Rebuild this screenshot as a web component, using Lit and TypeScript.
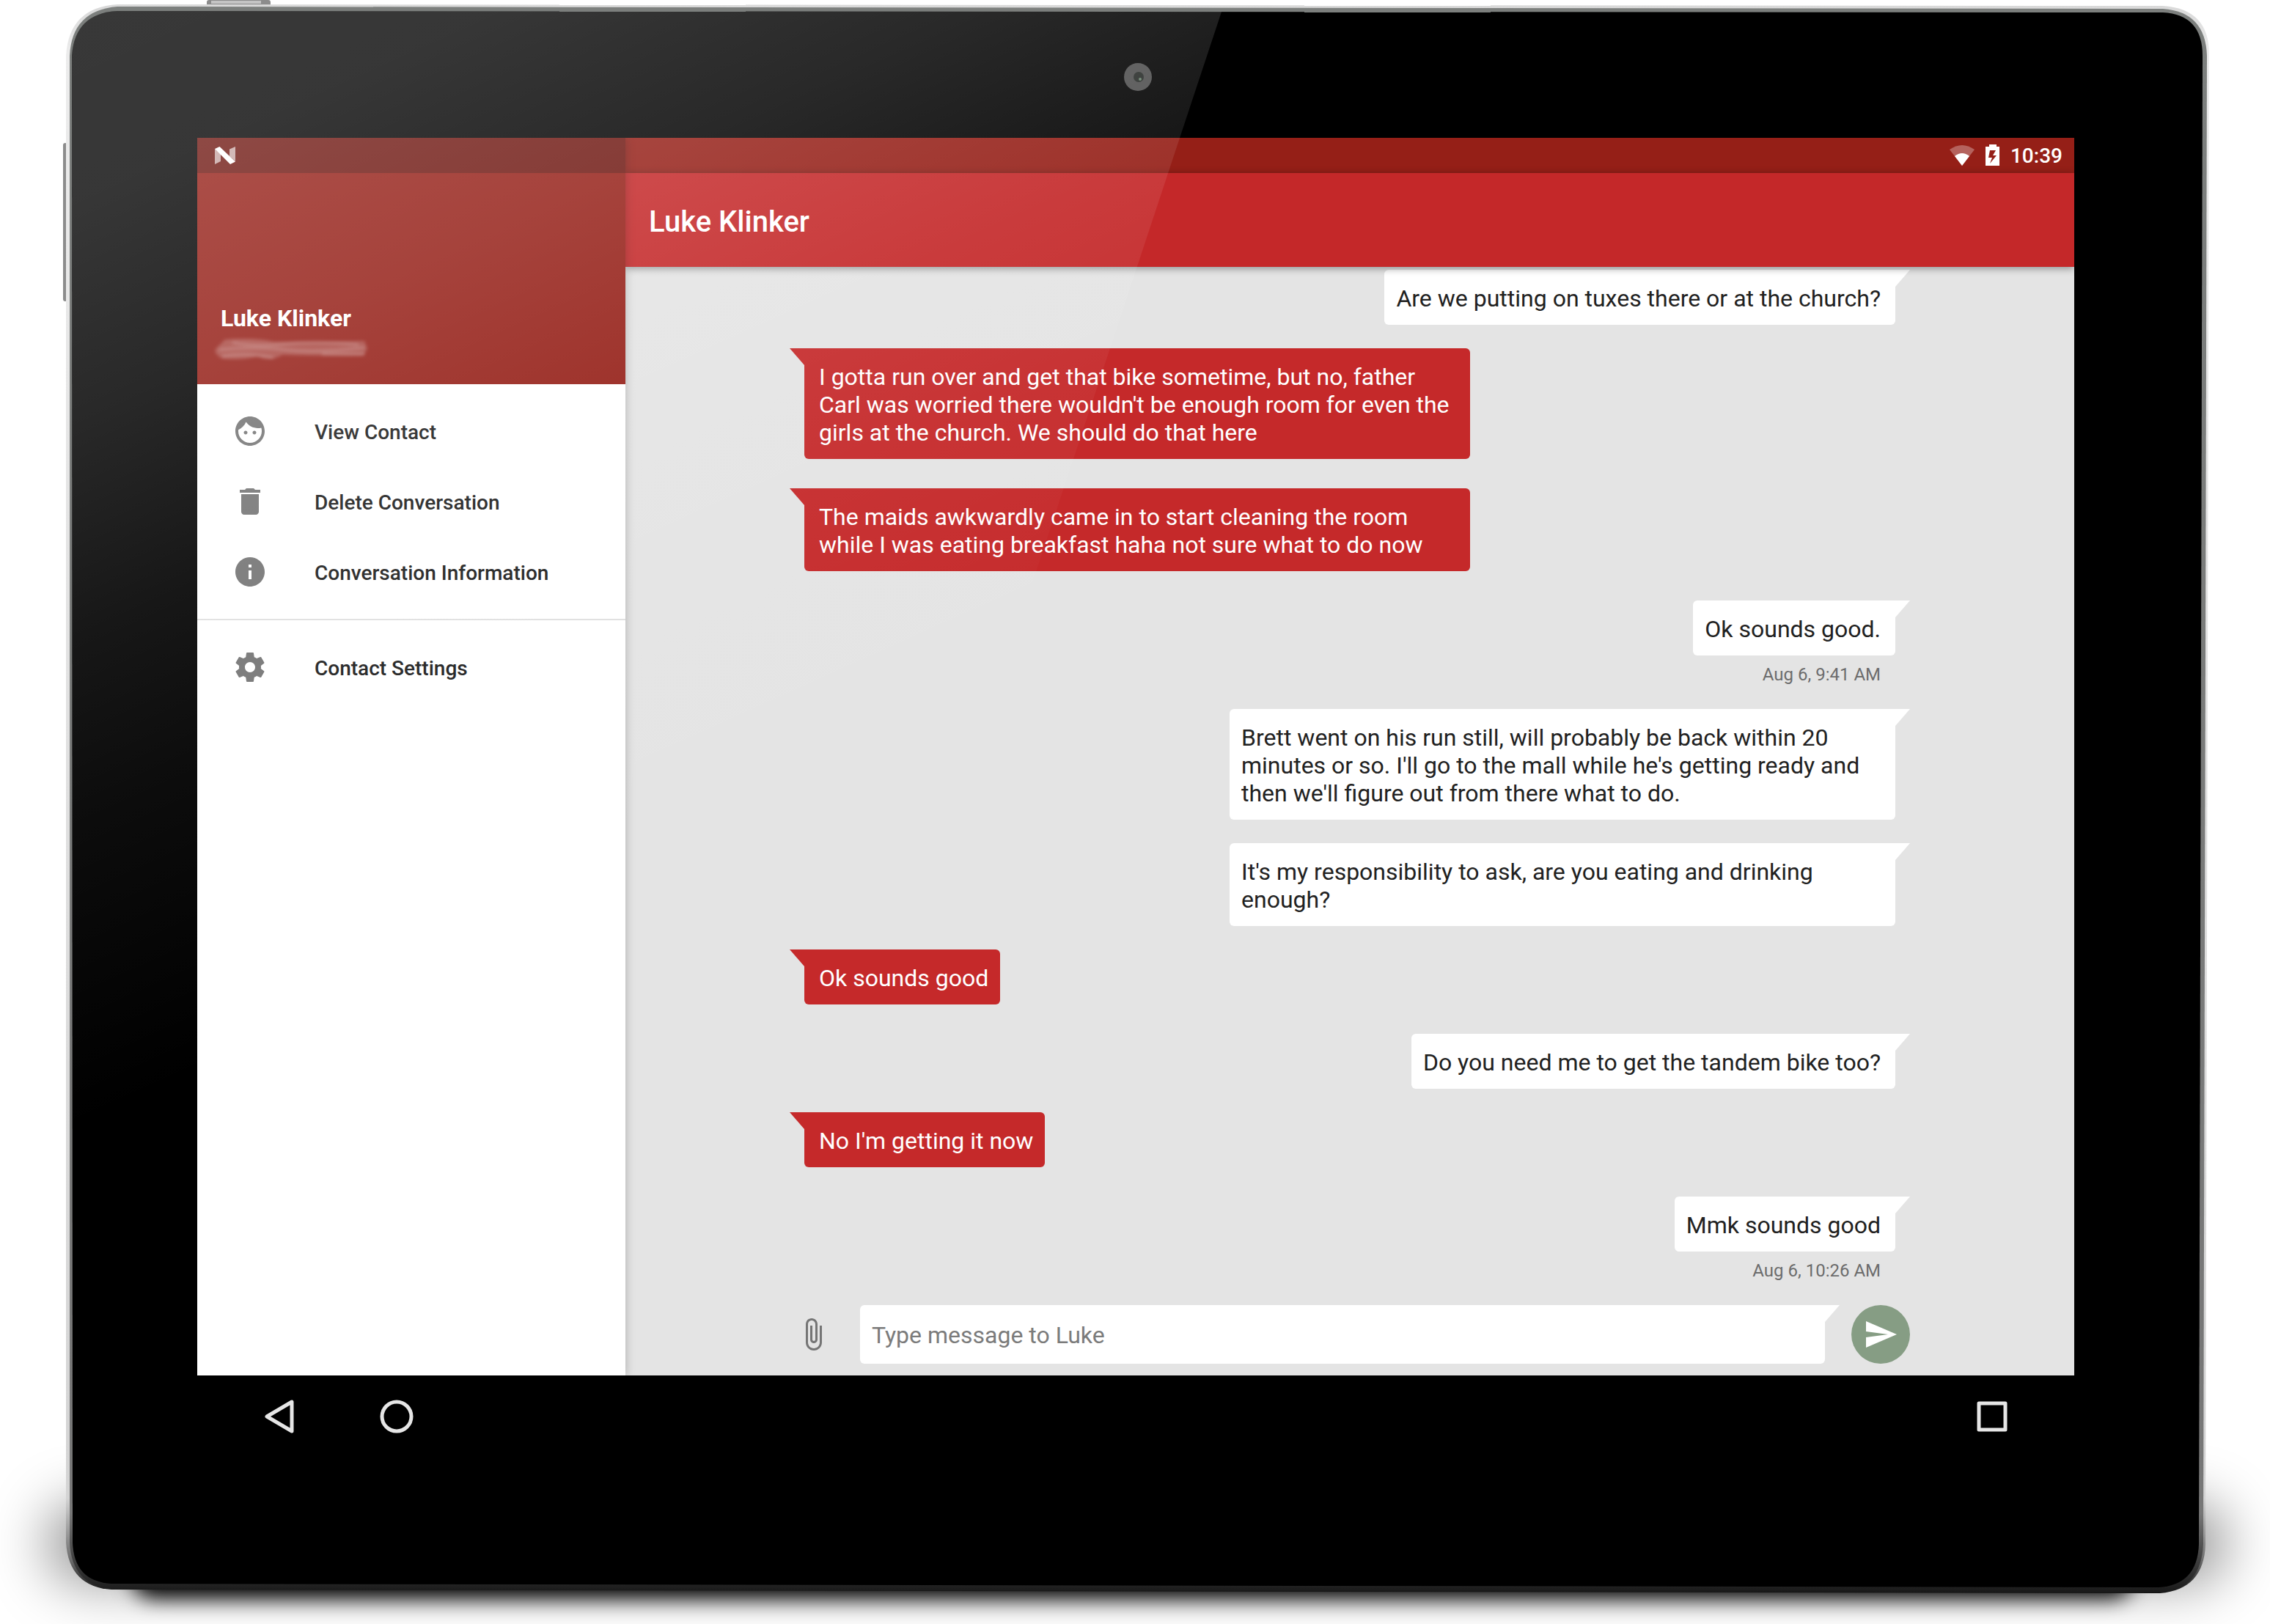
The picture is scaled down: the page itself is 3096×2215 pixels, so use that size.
import { LitElement, html, css, svg } from "lit";
import { customElement, property } from "lit/decorators.js";

const ICONS: Record<string, ReturnType<typeof svg>> = {
  face: svg`<path d="M9 11.75c-.69 0-1.25.56-1.25 1.25s.56 1.25 1.25 1.25 1.25-.56 1.25-1.25-.56-1.25-1.25-1.25zm6 0c-.69 0-1.25.56-1.25 1.25s.56 1.25 1.25 1.25 1.25-.56 1.25-1.25-.56-1.25-1.25-1.25zM12 2C6.48 2 2 6.48 2 12s4.48 10 10 10 10-4.48 10-10S17.52 2 12 2zm0 18c-4.41 0-8-3.59-8-8 0-.29.02-.58.05-.86 2.36-1.05 4.23-2.98 5.21-5.37C11.07 8.33 14.05 10 17.42 10c.78 0 1.53-.09 2.25-.26.21.71.33 1.47.33 2.26 0 4.41-3.59 8-8 8z"/>`,
  delete: svg`<path d="M6 19c0 1.1.9 2 2 2h8c1.1 0 2-.9 2-2V7H6v12zM19 4h-3.5l-1-1h-5l-1 1H5v2h14V4z"/>`,
  info: svg`<path d="M12 2C6.48 2 2 6.48 2 12s4.48 10 10 10 10-4.48 10-10S17.52 2 12 2zm1 15h-2v-6h2v6zm0-8h-2V7h2v2z"/>`,
  settings: svg`<path d="M19.43 12.98c.04-.32.07-.64.07-.98s-.03-.66-.07-.98l2.11-1.65c.19-.15.24-.42.12-.64l-2-3.46c-.12-.22-.39-.3-.61-.22l-2.49 1c-.52-.4-1.08-.73-1.69-.98l-.38-2.65C14.46 2.18 14.25 2 14 2h-4c-.25 0-.46.18-.49.42l-.38 2.65c-.61.25-1.17.59-1.69.98l-2.49-1c-.23-.09-.49 0-.61.22l-2 3.46c-.13.22-.07.49.12.64l2.11 1.65c-.04.32-.07.65-.07.98s.03.66.07.98l-2.11 1.65c-.19.15-.24.42-.12.64l2 3.46c.12.22.39.3.61.22l2.49-1c.52.4 1.08.73 1.69.98l.38 2.65c.03.24.24.42.49.42h4c.25 0 .46-.18.49-.42l.38-2.65c.61-.25 1.17-.59 1.69-.98l2.49 1c.23.09.49 0 .61-.22l2-3.46c.12-.22.07-.49-.12-.64l-2.11-1.65zM12 15.5c-1.93 0-3.5-1.57-3.5-3.5s1.57-3.5 3.5-3.5 3.5 1.57 3.5 3.5-1.57 3.5-3.5 3.5z"/>`,
  attach: svg`<path d="M16.5 6v11.5c0 2.21-1.79 4-4 4s-4-1.79-4-4V5c0-1.38 1.12-2.5 2.5-2.5s2.5 1.12 2.5 2.5v10.5c0 .55-.45 1-1 1s-1-.45-1-1V6H10v9.5c0 1.38 1.12 2.5 2.5 2.5s2.5-1.12 2.5-2.5V5c0-2.21-1.79-4-4-4S7 2.79 7 5v12.5c0 3.04 2.46 5.5 5.5 5.5s5.5-2.46 5.5-5.5V6h-1.5z"/>`,
  send: svg`<path d="M2.01 21L23 12 2.01 3 2 10l15 2-15 2z"/>`,
};

@customElement("md-icon")
class MdIcon extends LitElement {
  @property() name = "";
  static styles = css`
    :host { display: block; flex: none; width: 48px; height: 48px; }
    .icon { display: block; width: 100%; height: 100%; fill: currentColor; }
  `;
  render() {
    return html`<svg class="icon" viewBox="0 0 24 24" aria-hidden="true">${ICONS[this.name]}</svg>`;
  }
}

interface Message {
  from: "me" | "them";
  text: string;
  time?: string;
}

const MESSAGES: Message[] = [
  { from: "me", text: "Are we putting on tuxes there or at the church?" },
  { from: "them", text: "I gotta run over and get that bike sometime, but no, father Carl was worried there wouldn't be enough room for even the girls at the church. We should do that here" },
  { from: "them", text: "The maids awkwardly came in to start cleaning the room while I was eating breakfast haha not sure what to do now" },
  { from: "me", text: "Ok sounds good.", time: "Aug 6, 9:41 AM" },
  { from: "me", text: "Brett went on his run still, will probably be back within 20 minutes or so. I'll go to the mall while he's getting ready and then we'll figure out from there what to do." },
  { from: "me", text: "It's my responsibility to ask, are you eating and drinking enough?" },
  { from: "them", text: "Ok sounds good" },
  { from: "me", text: "Do you need me to get the tandem bike too?" },
  { from: "them", text: "No I'm getting it now" },
  { from: "me", text: "Mmk sounds good", time: "Aug 6, 10:26 AM" },
];

@customElement("chat-message")
class ChatMessage extends LitElement {
  @property({ attribute: false }) message!: Message;
  static styles = css`
    :host { display: block; }
    .row { display: flex; flex-direction: column; padding: 0 20px; }
    .me { align-items: flex-end; margin-bottom: 32px; }
    .them { align-items: flex-start; margin-bottom: 40px; }
    .bubble {
      position: relative;
      box-sizing: border-box;
      max-width: 908px;
      margin: 0;
      font-size: 32px;
      line-height: 38px;
    }
    .me .bubble {
      padding: 20px 20px 17px 16px;
      border-radius: 6px 0 6px 6px;
      background: #fff;
      color: #212121;
    }
    .them .bubble {
      padding: 20px 16px 17px 20px;
      border-radius: 0 6px 6px 6px;
      background: #c5292a;
      color: #fff;
    }
    .bubble::before {
      content: "";
      position: absolute;
      top: 0;
      width: 20px;
      height: 23px;
      background: inherit;
    }
    .me .bubble::before { left: 100%; clip-path: polygon(0 0, 100% 0, 0 100%); }
    .them .bubble::before { right: 100%; clip-path: polygon(0 0, 100% 0, 100% 100%); }
    .time {
      padding: 11px 20px 0;
      font-size: 24px;
      line-height: 30px;
      color: #6c6c6c;
    }
  `;
  render() {
    const m = this.message;
    return html`<div class="row ${m.from}">
      <p class="bubble">${m.text}</p>
      ${m.time ? html`<time class="time">${m.time}</time>` : null}
    </div>`;
  }
}

@customElement("contact-drawer")
class ContactDrawer extends LitElement {
  static styles = css`
    :host { display: flex; flex-direction: column; background: #fff; }
    .header {
      display: flex;
      flex-direction: column;
      height: 336px;
      background: #951f17;
      color: #fff;
    }
    .status {
      display: flex;
      align-items: center;
      height: 48px;
      padding: 0 24px;
      background: rgba(0, 0, 0, 0.25);
    }
    .nougat { display: block; width: 28px; height: 24px; }
    .person { margin-top: auto; padding: 0 20px 30px; }
    .name {
      margin: 0 0 4px;
      padding-left: 12px;
      font-size: 32px;
      line-height: 40px;
      font-weight: 700;
    }
    .smudge { display: block; width: 216px; height: 36px; }
    .menu { margin: 0; padding: 16px 0; list-style: none; }
    .menu + .menu { border-top: 2px solid #e0e0e0; }
    .item {
      display: flex;
      align-items: center;
      gap: 64px;
      width: 100%;
      height: 96px;
      padding: 0 48px;
      border: 0;
      background: none;
      color: #212121;
      font: 500 28px/40px Roboto, sans-serif;
      text-align: left;
    }
    .label { padding-top: 4px; }
    .glyph { color: #757575; }
  `;
  private item(icon: string, label: string) {
    return html`<li><button class="item" type="button"><md-icon class="glyph" name=${icon}></md-icon><span class="label">${label}</span></button></li>`;
  }
  render() {
    return html`
      <div class="header">
        <div class="status">
          <svg class="nougat" viewBox="0 0 28 24" aria-hidden="true">
            <path d="M0 3L8 10V20L0 24zM20 3.500L28 0V20L20 13z" fill="#fff" fill-opacity=".62"/>
            <path d="M0 3L6.500 0L28 20.500L21 24z" fill="#fff"/>
          </svg>
        </div>
        <div class="person">
          <h2 class="name">Luke Klinker</h2>
          <svg class="smudge" viewBox="0 0 216 36" aria-hidden="true">
            <defs><filter id="soft" x="-10%" y="-40%" width="120%" height="180%"><feGaussianBlur stdDeviation="2"/></filter></defs>
            <g filter="url(#soft)" fill="#fff">
              <path d="M18 5Q60 2 84 8Q140 9 208 7L212 17L207 27Q150 28 96 26Q80 36 62 28Q40 34 14 31Q2 24 5 18Z" fill-opacity=".2"/>
              <path d="M10 19Q60 14 100 19T208 16M14 28Q44 22 84 30M28 9Q60 16 100 11T200 12M150 25L208 25" fill="none" stroke="#fff" stroke-opacity=".16" stroke-width="4"/>
            </g>
          </svg>
        </div>
      </div>
      <ul class="menu">
        ${this.item("face", "View Contact")}
        ${this.item("delete", "Delete Conversation")}
        ${this.item("info", "Conversation Information")}
      </ul>
      <ul class="menu">
        ${this.item("settings", "Contact Settings")}
      </ul>
    `;
  }
}

@customElement("chat-pane")
class ChatPane extends LitElement {
  static styles = css`
    :host { display: flex; flex-direction: column; background: #e4e4e4; }
    .status {
      display: flex;
      align-items: center;
      justify-content: flex-end;
      height: 48px;
      padding: 0 16px;
      background: #951f17;
      color: #fff;
    }
    .wifi { display: block; width: 36px; height: 28px; margin-right: 14px; }
    .battery { display: block; width: 20px; height: 30px; margin-right: 14px; }
    .clock { padding-top: 2px; font-size: 28px; line-height: 46px; font-weight: 500; }
    .toolbar {
      position: relative;
      display: flex;
      align-items: center;
      box-sizing: border-box;
      height: 128px;
      padding: 6px 32px 0;
      background: #c42829;
      color: #fff;
      box-shadow: 0 2px 10px rgba(0, 0, 0, 0.4);
      z-index: 1;
    }
    .title { margin: 0; font-size: 40px; line-height: 48px; font-weight: 500; }
    .thread { flex: 1; padding: 4px 224px 0; }
    .compose {
      display: flex;
      align-items: center;
      padding: 0 224px 16px;
    }
    .attach {
      flex: none;
      display: grid;
      place-items: center;
      width: 48px;
      height: 80px;
      margin: 0 40px 0 8px;
      padding: 0;
      border: 0;
      background: none;
      color: #757575;
    }
    .field { position: relative; flex: 1; display: flex; margin-right: 36px; }
    .field::after {
      content: "";
      position: absolute;
      top: 0;
      left: 100%;
      width: 20px;
      height: 23px;
      background: #fff;
      clip-path: polygon(0 0, 100% 0, 0 100%);
    }
    .input {
      flex: 1;
      box-sizing: border-box;
      min-width: 0;
      height: 80px;
      padding: 2px 16px 0;
      border: 0;
      border-radius: 6px 0 6px 6px;
      background: #fff;
      color: #212121;
      font: 400 32px/38px Roboto, sans-serif;
    }
    .input::placeholder { color: #7b7b7b; opacity: 1; }
    .send {
      flex: none;
      display: grid;
      place-items: center;
      width: 80px;
      height: 80px;
      padding: 0;
      border: 0;
      border-radius: 50%;
      background: #869d84;
      color: #fff;
    }
  `;
  render() {
    return html`
      <div class="status">
        <svg class="wifi" viewBox="0 0 36 28" aria-hidden="true">
          <path d="M18 28L1 6Q18 -6 35 6Z" fill="#fff" fill-opacity=".3"/>
          <path d="M18 28L8 15Q18 7 28 15Z" fill="#fff"/>
        </svg>
        <svg class="battery" viewBox="0 0 20 30" aria-hidden="true">
          <path d="M5 0H15V3H19V29H0V3H5ZM6 8L4 18H9L6 26L15 15H10L14 8Z" fill="#fff" fill-rule="evenodd"/>
        </svg>
        <span class="clock">10:39</span>
      </div>
      <header class="toolbar"><h1 class="title">Luke Klinker</h1></header>
      <section class="thread" aria-label="Messages">
        ${MESSAGES.map((m) => html`<chat-message .message=${m}></chat-message>`)}
      </section>
      <form class="compose">
        <button class="attach" type="button" aria-label="Attach"><md-icon name="attach"></md-icon></button>
        <div class="field">
          <input class="input" type="text" aria-label="Message" placeholder="Type message to Luke" />
        </div>
        <button class="send" type="button" aria-label="Send"><md-icon name="send"></md-icon></button>
      </form>
    `;
  }
}

@customElement("app-root")
class AppRoot extends LitElement {
  static styles = css`
    :host { display: block; font-family: Roboto, sans-serif; }
    .stage {
      position: relative;
      display: flex;
      box-sizing: border-box;
      min-height: 100vh;
      padding: 188px 267px 227px 269px;
      background: #fff;
      overflow: hidden;
    }
    .layer { position: absolute; inset: 0; width: 100%; height: 100%; pointer-events: none; }
    .screen { position: relative; isolation: isolate; flex: 1; display: flex; flex-direction: column; min-width: 0; }
    .app { flex: 1; display: grid; grid-template-columns: 584px minmax(0, 1fr); }
    .drawer { position: relative; z-index: 2; box-shadow: 0 0 12px rgba(0, 0, 0, 0.25); clip-path: inset(0 -16px 0 0); }
    .nav {
      display: flex;
      align-items: center;
      height: 112px;
      padding: 0 64px;
    }
    .key { display: grid; place-items: center; width: 96px; height: 96px; padding: 0; border: 0; background: none; }
    .back { margin-right: 64px; }
    .recent { margin-left: auto; }
    .shape { display: block; width: 48px; height: 48px; fill: none; stroke: #e6e6e6; stroke-width: 5; stroke-linejoin: round; }
  `;
  render() {
    return html`
      <div class="stage">
        <svg class="layer" viewBox="0 0 3096 2215" preserveAspectRatio="none" aria-hidden="true">
          <defs>
            <filter id="wide" x="-10%" y="-100%" width="120%" height="300%"><feGaussianBlur stdDeviation="38"/></filter>
            <filter id="near" x="-10%" y="-200%" width="120%" height="500%"><feGaussianBlur stdDeviation="14"/></filter>
            <linearGradient id="rim" x1="0" y1="0" x2="0" y2="1">
              <stop offset="0" stop-color="#d8d8d8"/><stop offset=".03" stop-color="#ececec"/>
              <stop offset=".94" stop-color="#d4d4d4"/><stop offset=".98" stop-color="#6a6a6a"/><stop offset="1" stop-color="#111"/>
            </linearGradient>
            <linearGradient id="band" x1="0" y1="0" x2="0" y2="1">
              <stop offset="0" stop-color="#7c7f7d"/><stop offset=".95" stop-color="#777"/><stop offset="1" stop-color="#191919"/>
            </linearGradient>
          </defs>
          <rect x="64" y="2050" width="2972" height="110" rx="50" fill="#000" fill-opacity=".42" filter="url(#wide)"/>
          <rect x="180" y="2110" width="2730" height="70" rx="30" fill="#000" filter="url(#near)"/>
          <rect x="86" y="195" width="6" height="216" rx="3" fill="#8c8c8c"/>
          <rect x="282" y="0" width="87" height="10" rx="3" fill="#8c8c8c"/>
          <rect x="288" y="1" width="68" height="4" fill="#c4c4c4"/>
          <path d="M160 6L2950 8Q3013 12 3013 74L3008 2106Q3006 2168 2946 2173L152 2168Q94 2164 90 2104L90 76Q94 10 160 6Z" fill="url(#rim)"/>
          <path d="M160 9L2950 12Q3008 16 3010 76L3005 2106Q3002 2168 2946 2172L152 2167Q98 2162 95 2104L95 76Q98 14 160 9Z" fill="url(#band)"/>
          <path d="M160 15L2950 17Q3004 20 3004 76L2999 2106Q2997 2162 2944 2165L152 2160Q101 2157 99 2104L98 76Q102 18 160 15Z" fill="#000"/>
          <circle cx="1552" cy="105" r="19" fill="#4e4e4e"/>
          <circle cx="1553" cy="105" r="7" fill="#262a27"/>
          <circle cx="1555" cy="108" r="2" fill="#66806a"/>
        </svg>
        <div class="screen">
          <div class="app">
            <contact-drawer class="drawer"></contact-drawer>
            <chat-pane></chat-pane>
          </div>
          <nav class="nav" aria-label="System">
            <button class="key back" type="button" aria-label="Back">
              <svg class="shape" viewBox="0 0 48 48"><path d="M41 4V44L7 24Z"/></svg>
            </button>
            <button class="key" type="button" aria-label="Home">
              <svg class="shape" viewBox="0 0 48 48"><circle cx="24" cy="24" r="20"/></svg>
            </button>
            <button class="key recent" type="button" aria-label="Recent apps">
              <svg class="shape" viewBox="0 0 48 48"><rect x="6" y="6" width="36" height="36"/></svg>
            </button>
          </nav>
        </div>
        <svg class="layer" viewBox="0 0 3096 2215" preserveAspectRatio="none" aria-hidden="true">
          <defs>
            <linearGradient id="glare" gradientUnits="userSpaceOnUse" x1="0" y1="0" x2="595" y2="1320">
              <stop offset="0" stop-color="#fff" stop-opacity=".22"/>
              <stop offset=".2" stop-color="#fff" stop-opacity=".215"/>
              <stop offset=".39" stop-color="#fff" stop-opacity=".16"/>
              <stop offset=".58" stop-color="#fff" stop-opacity=".09"/>
              <stop offset=".73" stop-color="#fff" stop-opacity=".05"/>
              <stop offset="1" stop-color="#fff" stop-opacity="0"/>
            </linearGradient>
          </defs>
          <path d="M160 15L1666 16L1083 1776L99 1776L98 76Q102 18 160 15Z" fill="url(#glare)"/>
        </svg>
      </div>
    `;
  }
}
